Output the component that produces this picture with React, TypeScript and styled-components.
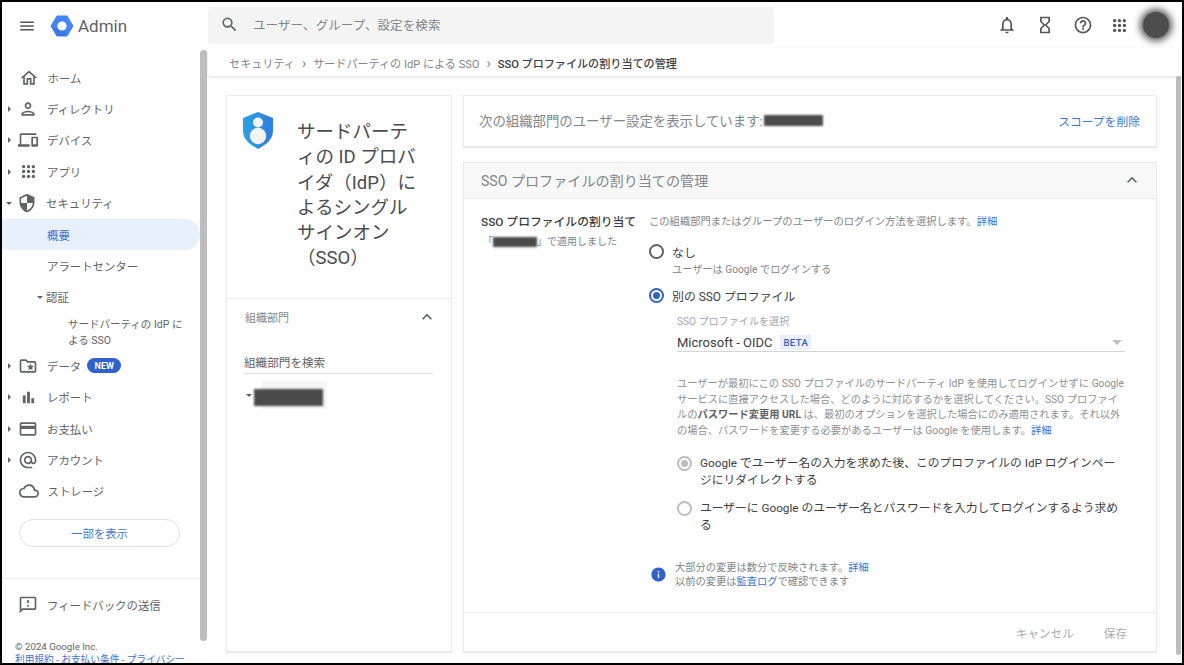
import React from 'react';
import styled, { createGlobalStyle } from 'styled-components';
import {
  MdMenu,
  MdSearch,
  MdNotificationsNone,
  MdHourglassEmpty,
  MdHelpOutline,
  MdOutlineHome,
  MdOutlinePerson,
  MdOutlineDevices,
  MdSecurity,
  MdOutlineFolderSpecial,
  MdBarChart,
  MdOutlineCreditCard,
  MdAlternateEmail,
  MdOutlineCloud,
  MdOutlineFeedback,
  MdInfo,
  MdExpandLess,
} from 'react-icons/md';

const GlobalStyle = createGlobalStyle`
  html, body {
    margin: 0;
    padding: 0;
    background: #fff;
    font-family: Roboto, "Noto Sans CJK JP", sans-serif;
  }
`;

const Dots = ({ size = 15 }: { size?: number }) => (
  <svg width={size} height={size} viewBox="0 0 20 20" fill="currentColor">
    {[3.5, 10, 16.5].map((y) => [3.5, 10, 16.5].map((x) => <circle key={`${x}-${y}`} cx={x} cy={y} r="2.2" />))}
  </svg>
);

const Logo = () => (
  <svg width="24" height="24" viewBox="0 0 24 24">
    <path d="M7 2h10l6 10-6 10H7L1 12z" fill="#4285f4" stroke="#4285f4" strokeWidth="1" strokeLinejoin="round" />
    <path d="M1 12l6 10h10l-3-6H9z" fill="#3b78e7" />
    <circle cx="12" cy="12" r="4.6" fill="#fff" />
  </svg>
);

const ShieldLogo = () => (
  <svg width="30" height="37" viewBox="0 0 30 37">
    <defs>
      <linearGradient id="shield" x1="0" y1="0" x2="1" y2="0">
        <stop offset="0" stopColor="#29a3e6" />
        <stop offset="1" stopColor="#2f7de0" />
      </linearGradient>
    </defs>
    <path d="M15 0l15 6v13c0 9-8 14-15 18C8 33 0 28 0 19V6z" fill="url(#shield)" />
    <circle cx="15" cy="10.500" r="5" fill="#f1f3f4" />
    <circle cx="15" cy="24" r="8.200" fill="#f1f3f4" />
  </svg>
);

const Frame = styled.div`
  width: 1184px;
  height: 665px;
  box-sizing: border-box;
  border: 2px solid #000;
  overflow: hidden;
  display: flex;
  flex-direction: column;
  color: #5f6368;
  background: #fff;
`;

const Header = styled.header`
  height: 46px;
  flex: none;
  display: flex;
  align-items: center;
`;

const MenuButton = styled.div`
  width: 20px;
  height: 20px;
  margin: 1px 0 0 15px;
  font-size: 18px;
  display: flex;
  align-items: center;
  justify-content: center;
  color: #555;
`;

const Brand = styled.div`
  display: flex;
  align-items: center;
  gap: 4px;
  width: 158px;
  margin: 1px 0 0 13px;
  font-size: 17px;
  color: #5f6368;
`;

const SearchBar = styled.div`
  width: 566px;
  height: 37px;
  background: #f4f4f4;
  border-radius: 4px;
  display: flex;
  align-items: center;
  gap: 14px;
  padding: 0 0 1px 12px;
  box-sizing: border-box;
  font-size: 12.500px;
  color: #80868b;
  letter-spacing: 0.1px;
  svg {
    font-size: 19px;
    color: #5f6368;
  }
`;

const HeaderIcons = styled.div`
  margin-left: auto;
  display: flex;
  align-items: center;
  gap: 18px;
  padding-right: 13px;
  color: #555;
`;

const HeaderIcon = styled.div`
  width: 20px;
  height: 20px;
  font-size: 20px;
  display: flex;
  align-items: center;
  justify-content: center;
`;

const AppsIcon = styled(HeaderIcon)`
  margin-left: -2px;
`;

const Avatar = styled.div`
  width: 26px;
  height: 26px;
  border-radius: 50%;
  background: #4d4d4d;
  box-shadow: 0 0 7px 3px rgba(30, 30, 30, 0.75);
  margin-left: -4px;
`;

const Body = styled.div`
  flex: 1;
  min-height: 0;
  display: flex;
`;

const Sidebar = styled.aside`
  width: 198px;
  flex: none;
  display: flex;
  flex-direction: column;
  padding-top: 14px;
  box-sizing: border-box;
  overflow: hidden;
`;

const Row = styled.div<{ $active?: boolean }>`
  height: 31.4px;
  flex: none;
  display: flex;
  align-items: center;
  font-size: 11.4px;
  padding-left: 4px;
  color: ${({ $active }) => ($active ? '#3f6fd8' : '#5f6368')};
  background: ${({ $active }) => ($active ? '#e8f0fe' : 'transparent')};
  border-radius: 0 16px 16px 0;
`;

const Caret = styled.span<{ $open?: boolean }>`
  width: 0;
  height: 0;
  flex: none;
  margin-left: ${({ $open }) => ($open ? '0' : '2px')};
  margin-right: ${({ $open }) => ($open ? '5px' : '7px')};
  border-style: solid;
  border-color: transparent;
  ${({ $open }) =>
    $open
      ? 'border-width: 3.500px 3.500px 0 3.500px; border-top-color: #5f6368;'
      : 'border-width: 3.500px 0 3.500px 3.500px; border-left-color: #5f6368;'}
`;

const CaretGap = styled.span`
  width: 12.500px;
  flex: none;
`;

const NavIcon = styled.span`
  width: 20px;
  height: 20px;
  flex: none;
  margin-right: 9px;
  font-size: 20px;
  display: flex;
  align-items: center;
  justify-content: center;
  color: #5f6368;
`;

const SubRow = styled(Row)`
  padding-left: 45px;
`;

const AuthRow = styled(Row)`
  padding-left: 35px;
  ${Caret} {
    margin-right: 3px;
  }
`;

const NestedRow = styled.div`
  flex: none;
  height: 37px;
  padding: 4px 8px 0 66px;
  font-size: 10.500px;
  line-height: 16px;
  box-sizing: border-box;
`;

const NewBadge = styled.span`
  margin-left: 6px;
  height: 15px;
  width: 34px;
  border-radius: 8px;
  background: #2f62cf;
  color: #fff;
  font-size: 9px;
  font-weight: 700;
  display: flex;
  align-items: center;
  justify-content: center;
`;

const ShowLess = styled.div`
  margin: 12px 0 0 17px;
  width: 161px;
  height: 28px;
  flex: none;
  box-sizing: border-box;
  border: 1px solid #dfe1e5;
  border-radius: 14px;
  color: #4a78d8;
  font-size: 11.400px;
  display: flex;
  align-items: center;
  justify-content: center;
`;

const SideDivider = styled.div`
  height: 1px;
  flex: none;
  margin-top: 31px;
  background: #ececec;
`;

const FeedbackRow = styled(Row)`
  margin-top: 10px;
  padding-left: 16px;
  font-size: 11.400px;
`;

const Legal = styled.div`
  margin: 21px 0 0 13px;
  font-size: 9.700px;
  line-height: 12.500px;
  white-space: nowrap;
  color: #5f6368;
  a {
    color: #3f6fd8;
  }
`;

const Thumb = styled.div`
  width: 7px;
  flex: none;
  margin: 2px 1px 22px 0;
  border-radius: 4px;
  background: #bdbdbd;
`;

const Main = styled.main`
  flex: 1;
  min-width: 0;
  display: flex;
  flex-direction: column;
`;

const Crumbs = styled.nav`
  height: 28px;
  flex: none;
  box-sizing: border-box;
  display: flex;
  align-items: center;
  gap: 7px;
  padding: 1px 0 0 21px;
  font-size: 11.100px;
  color: #80868b;
  box-shadow: 0 1px 3px rgba(0, 0, 0, 0.12);
  position: relative;
  b {
    color: #3c4043;
    font-weight: 500;
  }
`;

const CrumbSep = styled.span`
  font-size: 14px;
  line-height: 14px;
`;

const Content = styled.div`
  flex: 1;
  min-height: 0;
  display: flex;
`;

const Columns = styled.div`
  flex: 1;
  min-width: 0;
  display: flex;
  gap: 11px;
  padding: 19px 19px 11px 18px;
  box-sizing: border-box;
  background: #fdfdfd;
`;

const Card = styled.section`
  background: #fff;
  border: 1px solid #ebebeb;
  box-sizing: border-box;
  box-shadow: 0 1px 1px rgba(0, 0, 0, 0.08);
`;

const LeftCard = styled(Card)`
  width: 226px;
  flex: none;
`;

const AppHead = styled.div`
  height: 203px;
  box-sizing: border-box;
  border-bottom: 1px solid #ebebeb;
  display: flex;
  padding: 16px 0 0 16px;
`;

const AppTitle = styled.h1`
  margin: 8px 0 0 24px;
  width: 126px;
  font-size: 18.500px;
  font-weight: 400;
  line-height: 25.300px;
  color: #4a4d50;
`;

const OrgHead = styled.div`
  display: flex;
  align-items: center;
  justify-content: space-between;
  padding: 4px 14px 0 18px;
  height: 28px;
  font-size: 11px;
  color: #80868b;
  svg {
    font-size: 20px;
    color: #5f6368;
  }
`;

const OrgSearch = styled.div`
  margin: 23px 18px 0 17px;
  height: 19px;
  border-bottom: 1px solid #e0e0e0;
  font-size: 11.600px;
  line-height: 19px;
  color: #5f6368;
`;

const OrgTree = styled.div`
  margin: 7px 0 0 19px;
  display: flex;
  align-items: center;
  ${() => Caret} {
    margin-right: 10px;
  }
`;

const OrgChip = styled.div`
  width: 65px;
  height: 28px;
  background: #f6f6f6;
  display: flex;
  align-items: center;
`;

const Redacted = styled.span<{ $w: number; $h: number }>`
  display: inline-block;
  flex: none;
  width: ${({ $w }) => $w}px;
  height: ${({ $h }) => $h}px;
  background: #4a4a4a;
  filter: blur(1px);
  vertical-align: middle;
`;

const ChipRedacted = styled(Redacted)`
  margin: 5px 0 0 -8px;
`;

const ScopeRedacted = styled(Redacted)`
  margin-left: 1px;
`;

const RightCol = styled.div`
  flex: 1;
  min-width: 0;
  display: flex;
  flex-direction: column;
  gap: 15px;
`;

const ScopeCard = styled(Card)`
  height: 52px;
  flex: none;
  display: flex;
  align-items: center;
  padding: 0 16px 2px 15px;
  font-size: 13.400px;
  color: #80868b;
`;

const ScopeLink = styled.a`
  margin-left: auto;
  font-size: 11.800px;
  color: #3f73dc;
`;

const SettingsCard = styled(Card)`
  flex: 1;
  display: flex;
  flex-direction: column;
`;

const SettingsHead = styled.div`
  height: 36px;
  flex: none;
  box-sizing: border-box;
  background: #f8f8f8;
  border-bottom: 1px solid #ebebeb;
  display: flex;
  align-items: center;
  justify-content: space-between;
  padding: 0 14px 1px 17px;
  font-size: 14.100px;
  color: #80868b;
  svg {
    font-size: 20px;
    color: #5f6368;
  }
`;

const SettingsBody = styled.div`
  flex: 1;
  display: flex;
  padding: 14px 0 0 17px;
`;

const LabelCol = styled.div`
  width: 168px;
  flex: none;
`;

const SettingLabel = styled.div`
  font-size: 11.800px;
  font-weight: 500;
  line-height: 18px;
  color: #3c4043;
`;

const AppliedNote = styled.div`
  margin-top: 3px;
  font-size: 10px;
  line-height: 16px;
  color: #80868b;
  padding-left: 2px;
`;

const OptionsCol = styled.div`
  flex: 1;
  font-size: 10px;
  color: #80868b;
`;

const Description = styled.div`
  line-height: 16px;
  font-size: 10.300px;
  margin-top: 1px;
  a {
    color: #3f73dc;
  }
`;

const RadioRow = styled.div<{ $top: number }>`
  display: flex;
  align-items: center;
  gap: 8px;
  font-size: 11.900px;
  color: #3c4043;
  margin-top: ${({ $top }) => $top}px;
`;

const Radio = styled.span<{ $on?: boolean; $muted?: boolean }>`
  width: 15px;
  height: 15px;
  flex: none;
  box-sizing: border-box;
  border-radius: 50%;
  border: 2px solid ${({ $on, $muted }) => ($muted ? '#bdbdbd' : $on ? '#2f62cf' : '#5f6368')};
  display: flex;
  align-items: center;
  justify-content: center;
  &::after {
    content: '';
    display: ${({ $on }) => ($on ? 'block' : 'none')};
    width: 7px;
    height: 7px;
    border-radius: 50%;
    background: ${({ $muted }) => ($muted ? '#bdbdbd' : '#2f62cf')};
  }
`;

const RadioHint = styled.div`
  margin: 3px 0 0 23px;
  line-height: 14px;
  font-size: 10.200px;
`;

const Nested = styled.div`
  margin-left: 28px;
  width: 448px;
`;

const FieldLabel = styled.div`
  margin-top: 11px;
  font-size: 10.100px;
  line-height: 14px;
  color: #a3a6aa;
`;

const SelectLine = styled.div`
  height: 19px;
  margin-top: 4px;
  box-sizing: border-box;
  border-bottom: 1px solid #d5d5d5;
  display: flex;
  align-items: center;
  font-size: 13px;
  color: #3c4043;
`;

const Beta = styled.span`
  margin-left: 8px;
  background: #e8f0fe;
  color: #3a5fb8;
  font-size: 9.500px;
  font-weight: 500;
  letter-spacing: 0.4px;
  padding: 2px 3px;
`;

const SelectArrow = styled.span`
  margin-left: auto;
  margin-right: 3px;
  width: 0;
  height: 0;
  border-style: solid;
  border-color: #bdbdbd transparent transparent transparent;
  border-width: 5px 5px 0 5px;
`;

const HelpText = styled.div`
  margin-top: 24px;
  padding-bottom: 5px;
  font-size: 10.250px;
  line-height: 15.700px;
  color: #8d9094;
  white-space: nowrap;
  b {
    font-weight: 700;
    color: #5f6368;
  }
  a {
    color: #3f73dc;
  }
`;

const SubOption = styled.div`
  display: flex;
  gap: 8px;
  margin-top: 11px;
  font-size: 11.750px;
  line-height: 17px;
  color: #3c4043;
  white-space: nowrap;
  ${Radio} {
    margin-top: 1px;
  }
`;

const InfoNote = styled.div`
  display: flex;
  align-items: center;
  gap: 8px;
  margin: 27px 0 0 1px;
  font-size: 10.250px;
  line-height: 14px;
  svg {
    font-size: 17px;
    color: #2f62cf;
    flex: none;
  }
  a {
    color: #3f73dc;
  }
`;

const Footer = styled.div`
  height: 38px;
  flex: none;
  box-sizing: content-box;
  border-top: 1px solid #ebebeb;
  display: flex;
  align-items: center;
  justify-content: flex-end;
  gap: 30px;
  padding-right: 29px;
  font-size: 11.600px;
  color: #a8abaf;
  span {
    margin-top: 1px;
  }
`;

const PageThumb = styled.div`
  width: 5px;
  flex: none;
  margin: 0 1px 8px 0;
  border-radius: 3px;
  background: #bdbdbd;
`;

const navTop = [
  { label: 'ホーム', icon: <MdOutlineHome />, caret: false },
  { label: 'ディレクトリ', icon: <MdOutlinePerson />, caret: true },
  { label: 'デバイス', icon: <MdOutlineDevices />, caret: true },
  { label: 'アプリ', icon: <Dots />, caret: true },
];

const navBottom = [
  { label: 'レポート', icon: <MdBarChart size={17} />, caret: true },
  { label: 'お支払い', icon: <MdOutlineCreditCard />, caret: true },
  { label: 'アカウント', icon: <MdAlternateEmail />, caret: true },
  { label: 'ストレージ', icon: <MdOutlineCloud />, caret: false },
];

const App = () => {
  return (
    <Frame>
      <GlobalStyle />
      <Header>
        <MenuButton>
          <MdMenu />
        </MenuButton>
        <Brand>
          <Logo />
          Admin
        </Brand>
        <SearchBar>
          <MdSearch />
          ユーザー、グループ、設定を検索
        </SearchBar>
        <HeaderIcons>
          <HeaderIcon>
            <MdNotificationsNone />
          </HeaderIcon>
          <HeaderIcon>
            <MdHourglassEmpty />
          </HeaderIcon>
          <HeaderIcon>
            <MdHelpOutline />
          </HeaderIcon>
          <AppsIcon>
            <Dots />
          </AppsIcon>
          <Avatar />
        </HeaderIcons>
      </Header>
      <Body>
        <Sidebar>
          {navTop.map((item) => (
            <Row key={item.label}>
              {item.caret ? <Caret /> : <CaretGap />}
              <NavIcon>{item.icon}</NavIcon>
              {item.label}
            </Row>
          ))}
          <Row>
            <Caret $open />
            <NavIcon>
              <MdSecurity />
            </NavIcon>
            セキュリティ
          </Row>
          <SubRow $active>概要</SubRow>
          <SubRow>アラートセンター</SubRow>
          <AuthRow>
            <Caret $open />
            認証
          </AuthRow>
          <NestedRow>
            サードパーティの IdP に
            <br />
            よる SSO
          </NestedRow>
          <Row>
            <Caret />
            <NavIcon>
              <MdOutlineFolderSpecial />
            </NavIcon>
            データ
            <NewBadge>NEW</NewBadge>
          </Row>
          {navBottom.map((item) => (
            <Row key={item.label}>
              {item.caret ? <Caret /> : <CaretGap />}
              <NavIcon>{item.icon}</NavIcon>
              {item.label}
            </Row>
          ))}
          <ShowLess>一部を表示</ShowLess>
          <SideDivider />
          <FeedbackRow>
            <NavIcon>
              <MdOutlineFeedback />
            </NavIcon>
            フィードバックの送信
          </FeedbackRow>
          <Legal>
            © 2024 Google Inc.
            <br />
            <a>利用規約</a> - <a>お支払い条件</a> - <a>プライバシー</a>
          </Legal>
        </Sidebar>
        <Thumb />
        <Main>
          <Crumbs>
            <span>セキュリティ</span>
            <CrumbSep>›</CrumbSep>
            <span>サードパーティの IdP による SSO</span>
            <CrumbSep>›</CrumbSep>
            <b>SSO プロファイルの割り当ての管理</b>
          </Crumbs>
          <Content>
            <Columns>
              <LeftCard>
                <AppHead>
                  <ShieldLogo />
                  <AppTitle>サードパーティの ID プロバイダ（IdP）によるシングルサインオン（SSO）</AppTitle>
                </AppHead>
                <OrgHead>
                  組織部門
                  <MdExpandLess />
                </OrgHead>
                <OrgSearch>組織部門を検索</OrgSearch>
                <OrgTree>
                  <Caret $open />
                  <OrgChip>
                    <ChipRedacted $w={69} $h={17} />
                  </OrgChip>
                </OrgTree>
              </LeftCard>
              <RightCol>
                <ScopeCard>
                  次の組織部門のユーザー設定を表示しています:
                  <ScopeRedacted $w={59} $h={11} />
                  <ScopeLink>スコープを削除</ScopeLink>
                </ScopeCard>
                <SettingsCard>
                  <SettingsHead>
                    SSO プロファイルの割り当ての管理
                    <MdExpandLess />
                  </SettingsHead>
                  <SettingsBody>
                    <LabelCol>
                      <SettingLabel>SSO プロファイルの割り当て</SettingLabel>
                      <AppliedNote>
                        「<Redacted $w={44} $h={10} />」で適用しました
                      </AppliedNote>
                    </LabelCol>
                    <OptionsCol>
                      <Description>
                        この組織部門またはグループのユーザーのログイン方法を選択します。<a>詳細</a>
                      </Description>
                      <RadioRow $top={13}>
                        <Radio />
                        なし
                      </RadioRow>
                      <RadioHint>ユーザーは Google でログインする</RadioHint>
                      <RadioRow $top={10}>
                        <Radio $on />
                        別の SSO プロファイル
                      </RadioRow>
                      <Nested>
                        <FieldLabel>SSO プロファイルを選択</FieldLabel>
                        <SelectLine>
                          Microsoft - OIDC
                          <Beta>BETA</Beta>
                          <SelectArrow />
                        </SelectLine>
                        <HelpText>
                          ユーザーが最初にこの SSO プロファイルのサードパーティ IdP を使用してログインせずに Google
                          <br />
                          サービスに直接アクセスした場合、どのように対応するかを選択してください。SSO プロファイ
                          <br />
                          ルの<b>パスワード変更用 URL</b> は、最初のオプションを選択した場合にのみ適用されます。それ以外
                          <br />
                          の場合、パスワードを変更する必要があるユーザーは Google を使用します。<a>詳細</a>
                        </HelpText>
                        <SubOption>
                          <Radio $on $muted />
                          <span>
                            Google でユーザー名の入力を求めた後、このプロファイルの IdP ログインペー
                            <br />
                            ジにリダイレクトする
                          </span>
                        </SubOption>
                        <SubOption>
                          <Radio $muted />
                          <span>
                            ユーザーに Google のユーザー名とパスワードを入力してログインするよう求め
                            <br />る
                          </span>
                        </SubOption>
                      </Nested>
                      <InfoNote>
                        <MdInfo />
                        <span>
                          大部分の変更は数分で反映されます。<a>詳細</a>
                          <br />
                          以前の変更は<a>監査ログ</a>で確認できます
                        </span>
                      </InfoNote>
                    </OptionsCol>
                  </SettingsBody>
                  <Footer>
                    <span>キャンセル</span>
                    <span>保存</span>
                  </Footer>
                </SettingsCard>
              </RightCol>
            </Columns>
            <PageThumb />
          </Content>
        </Main>
      </Body>
    </Frame>
  );
};

export default App;
